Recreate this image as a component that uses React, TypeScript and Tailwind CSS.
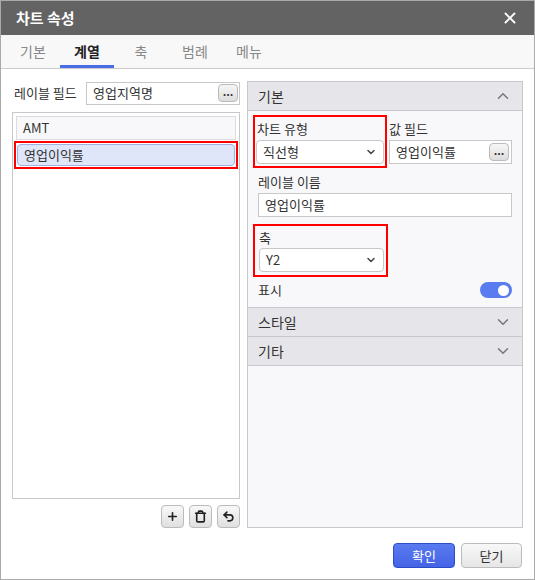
import { ChevronDown, ChevronUp, Plus, Trash, Undo2, X } from "lucide-react";

const font = { fontFamily: '"Noto Sans CJK KR", "Noto Sans", sans-serif' };

function Dots() {
  return (
    <span className="w-[20px] h-[18px] rounded-sm border border-[#bbb] bg-gradient-to-b from-[#f6f6f6] to-[#ddd] flex items-center justify-center text-[11px] font-bold leading-none pb-[4px]">
      ...
    </span>
  );
}

function Select({ value, w }: { value: string; w: string }) {
  return (
    <div className={`${w} h-[24px] border border-[#c8c8c8] bg-white rounded-sm flex items-center justify-between px-[6px]`}>
      <span>{value}</span>
      <ChevronDown size={12} strokeWidth={3} className="text-[#444]" />
    </div>
  );
}

function SectionHead({ title, open }: { title: string; open?: boolean }) {
  return (
    <div className="h-[29px] bg-[#e6e6ea] border-b border-[#c8c8cc] flex items-center justify-between px-[10px] text-[14px] text-[#333]">
      <span>{title}</span>
      {open ? (
        <ChevronUp size={18} className="text-[#777]" />
      ) : (
        <ChevronDown size={18} className="text-[#777]" />
      )}
    </div>
  );
}

export default function App() {
  const tabs = ["기본", "계열", "축", "범례", "메뉴"];
  return (
    <div style={font} className="w-[535px] h-[580px] border border-[#aaa] bg-white flex flex-col text-[13px] text-[#333]">
      <div className="h-[34px] bg-[#636363] flex items-center justify-between px-[15px] text-white text-[15px] font-bold">
        <span>차트 속성</span>
        <X size={18} strokeWidth={2.5} />
      </div>
      <div className="h-[34px] bg-[#f8f8f9] border-b border-[#ccc] flex px-[5px]">
        {tabs.map((t, i) => (
          <div
            key={t}
            className={`w-[54px] flex items-center justify-center text-[14px] ${
              i === 1 ? "font-bold text-[#222] border-b-[3px] border-[#4a6de5] pt-[3px]" : "text-[#888]"
            }`}
          >
            {t}
          </div>
        ))}
      </div>
      <div className="flex-1 flex gap-[7px] px-[11px] pt-[12px]">
        <div className="w-[229px] flex flex-col">
          <div className="flex items-center justify-between h-[24px]">
            <span className="pl-[2px]">레이블 필드</span>
            <div className="w-[154px] h-[23px] border border-[#c8c8c8] flex items-center justify-between pl-[6px] pr-[1px]">
              <span>영업지역명</span>
              <Dots />
            </div>
          </div>
          <div className="mt-[7px] h-[387px] border border-[#c8c8c8] p-[3px] flex flex-col">
            <div className="h-[24px] flex items-center px-[6px] border border-[#dcdce0] bg-[#f8f8fa]">AMT</div>
            <div className="border-2 border-[#f00] -mx-[2px] p-[1px] mt-[1px]">
              <div className="h-[22px] flex items-center px-[6px] bg-[#dfe6f9] border border-[#9fb0e3] rounded-sm">영업이익률</div>
            </div>
          </div>
          <div className="flex justify-end gap-[5px] mt-[6px]">
            {[Plus, Trash, Undo2].map((I, k) => (
              <span key={k} className="w-[23px] h-[23px] rounded border border-[#bbb] bg-gradient-to-b from-[#f8f8f8] to-[#e0e0e0] flex items-center justify-center">
                <I size={13} strokeWidth={3} className="text-[#222]" />
              </span>
            ))}
          </div>
        </div>
        <div className="w-[277px] h-[447px] border border-[#c8c8cc] bg-[#f8f8fa] flex flex-col">
          <SectionHead title="기본" open />
          <div className="px-[5px] pt-[4px] pb-[6px]">
            <div className="flex gap-[2px]">
              <div className="w-[134px] border-2 border-[#f00] px-[1px] pt-[1px] pb-[2px]">
                <div className="h-[22px] flex items-center pl-[1px]">차트 유형</div>
                <Select value="직선형" w="w-[128px]" />
              </div>
              <div className="flex-1 pt-[3px] pr-[5px]">
                <div className="h-[22px] flex items-center">값 필드</div>
                <div className="h-[24px] border border-[#c8c8c8] bg-white flex items-center justify-between pl-[6px] pr-[2px]">
                  <span>영업이익률</span>
                  <Dots />
                </div>
              </div>
            </div>
            <div className="px-[5px] mt-[3px]">
              <div className="h-[22px] flex items-center">레이블 이름</div>
              <div className="h-[24px] border border-[#c8c8c8] bg-white flex items-center px-[6px]">영업이익률</div>
            </div>
            <div className="w-[135px] border-2 border-[#f00] px-[4px] pt-[2px] pb-[3px] mt-[7px]">
              <div className="h-[20px] flex items-center">축</div>
              <Select value="Y2" w="w-[125px]" />
            </div>
            <div className="flex items-center justify-between px-[5px] mt-[2px] h-[22px]">
              <span>표시</span>
              <span className="w-[32px] h-[16px] rounded-full bg-[#5b7cf0] flex items-center justify-end pr-[3px]">
                <span className="w-[11px] h-[11px] rounded-full bg-white" />
              </span>
            </div>
          </div>
          <div className="border-t border-[#c8c8cc]" />
          <SectionHead title="스타일" />
          <SectionHead title="기타" />
        </div>
      </div>
      <div className="flex justify-end gap-[6px] px-[12px] pb-[11px]">
        <span className="w-[62px] h-[25px] rounded border border-[#2d4bc8] bg-gradient-to-b from-[#5a7af0] to-[#4464e6] text-white flex items-center justify-center">확인</span>
        <span className="w-[61px] h-[25px] rounded border border-[#bbb] bg-gradient-to-b from-[#f8f8f8] to-[#e6e6e6] flex items-center justify-center">닫기</span>
      </div>
    </div>
  );
}
